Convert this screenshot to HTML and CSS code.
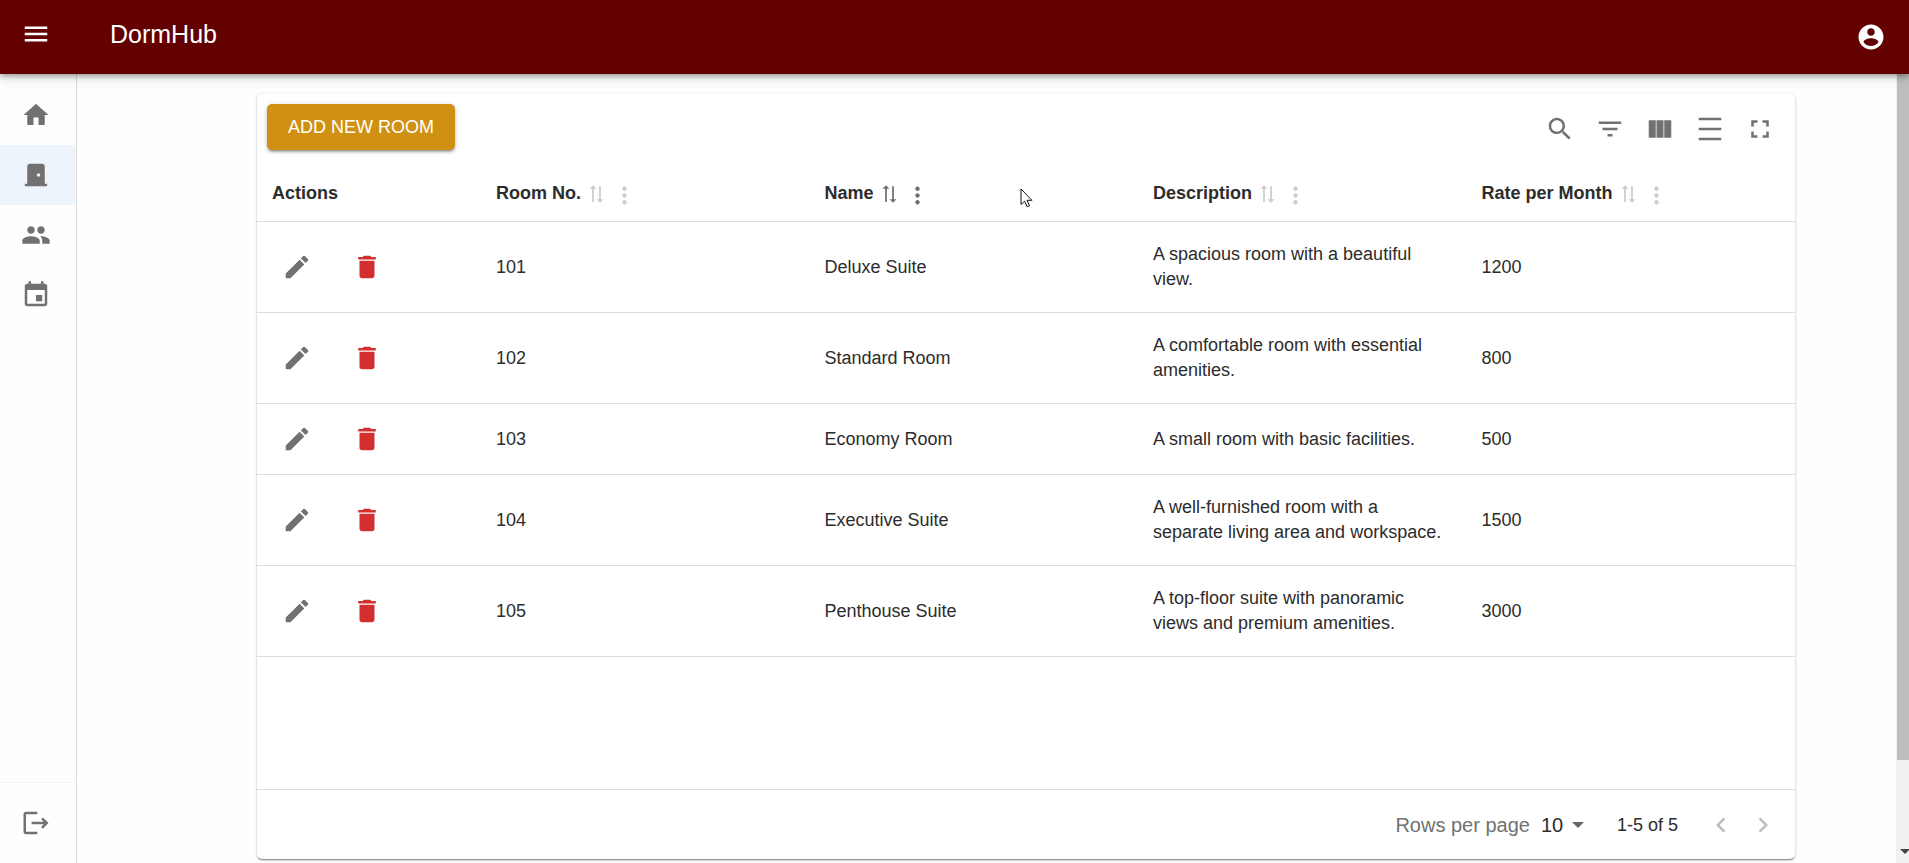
FILE: index.html
```html
<!DOCTYPE html>
<html lang="en">
<head>
<meta charset="utf-8">
<title>DormHub</title>
<link rel="stylesheet" href="styles.css">
</head>
<body>
<svg class="sprite" aria-hidden="true">
  <symbol id="edit" viewBox="0 0 24 24"><path d="M3 17.25V21h3.75L17.81 9.94l-3.75-3.75L3 17.25zM20.71 7.04c.39-.39.39-1.02 0-1.41l-2.34-2.34a.9959.9959 0 0 0-1.41 0l-1.83 1.83 3.75 3.75 1.83-1.83z"/></symbol>
  <symbol id="delete" viewBox="0 0 24 24"><path d="M6 19c0 1.1.9 2 2 2h8c1.1 0 2-.9 2-2V7H6v12zM19 4h-3.5l-1-1h-5l-1 1H5v2h14V4z"/></symbol>
  <symbol id="sort" viewBox="0 0 24 24"><path d="M8 2L4 6h3v15h2V6h3L8 2zM16 22l4-4h-3V3h-2v15h-3l4 4z"/></symbol>
  <symbol id="more" viewBox="0 0 24 24"><path d="M12 8c1.1 0 2-.9 2-2s-.9-2-2-2-2 .9-2 2 .9 2 2 2zm0 2c-1.1 0-2 .9-2 2s.9 2 2 2 2-.9 2-2-.9-2-2-2zm0 6c-1.1 0-2 .9-2 2s.9 2 2 2 2-.9 2-2-.9-2-2-2z"/></symbol>
</svg>

<header class="topbar">
  <button class="icon-button" aria-label="Open menu"><svg class="icon" viewBox="0 0 24 24"><path d="M3 18h18v-2H3v2zm0-5h18v-2H3v2zm0-7v2h18V6H3z"/></svg></button>
  <h1 class="brand">DormHub</h1>
  <button class="icon-button account" aria-label="Account"><svg class="icon" viewBox="0 0 24 24"><path d="M12 2C6.48 2 2 6.48 2 12s4.48 10 10 10 10-4.48 10-10S17.52 2 12 2zm0 3c1.66 0 3 1.34 3 3s-1.34 3-3 3-3-1.34-3-3 1.34-3 3-3zm0 14.2c-2.5 0-4.71-1.28-6-3.22.03-1.99 4-3.08 6-3.08 1.99 0 5.97 1.09 6 3.08-1.29 1.94-3.5 3.22-6 3.22z"/></svg></button>
</header>

<div class="layout">
  <nav class="sidebar" aria-label="Main">
    <a class="nav-item" href="#home" aria-label="Home"><svg class="icon" viewBox="0 0 24 24"><path d="M10 20v-6h4v6h5v-8h3L12 3 2 12h3v8z"/></svg></a>
    <a class="nav-item selected" href="#rooms" aria-label="Rooms" aria-current="page"><svg class="icon" viewBox="0 0 24 24"><path d="M20 19h-1V5c0-1.100-.9-2-2-2H7c-1.100 0-2 .9-2 2v14H4c-.55 0-1 .45-1 1s.45 1 1 1h16c.55 0 1-.45 1-1s-.45-1-1-1zm-6-5.600c-.77 0-1.400-.63-1.400-1.400s.63-1.400 1.400-1.400 1.400.63 1.400 1.400-.63 1.400-1.400 1.400z"/></svg></a>
    <a class="nav-item" href="#tenants" aria-label="Tenants"><svg class="icon" viewBox="0 0 24 24"><path d="M16 11c1.660 0 2.990-1.340 2.990-3S17.660 5 16 5c-1.660 0-3 1.340-3 3s1.340 3 3 3zm-8 0c1.660 0 2.990-1.340 2.990-3S9.660 5 8 5C6.340 5 5 6.340 5 8s1.340 3 3 3zm0 2c-2.330 0-7 1.170-7 3.500V19h14v-2.500c0-2.330-4.670-3.500-7-3.500zm8 0c-.29 0-.62.02-.97.05 1.160.84 1.970 1.970 1.970 3.450V19h6v-2.500c0-2.330-4.670-3.500-7-3.500z"/></svg></a>
    <a class="nav-item" href="#calendar" aria-label="Calendar"><svg class="icon" viewBox="0 0 24 24"><path d="M17 12h-5v5h5v-5zM16 1v2H8V1H6v2H5c-1.110 0-1.990.9-1.990 2L3 19c0 1.100.89 2 2 2h14c1.100 0 2-.9 2-2V5c0-1.100-.9-2-2-2h-1V1h-2zm3 18H5V8h14v11z"/></svg></a>
    <div class="nav-end">
      <a class="nav-item" href="#logout" aria-label="Log out"><svg class="icon" viewBox="0 0 24 24"><path d="M13 3H4c-1.100 0-2 .9-2 2v14c0 1.100.9 2 2 2h9v-2H4V5h9zM17.500 7.500l-1.400 1.400 2.100 2.100H8.500v2h9.700l-2.100 2.100 1.400 1.400L22 12z"/></svg></a>
    </div>
  </nav>

  <main class="content">
    <section class="card" aria-label="Rooms">
      <div class="toolbar">
        <button class="add-button">ADD NEW ROOM</button>
        <div class="tools">
          <button class="icon-button" aria-label="Search"><svg class="icon" viewBox="0 0 24 24"><path d="M15.500 14h-.79l-.28-.27C15.410 12.590 16 11.110 16 9.500 16 5.910 13.090 3 9.500 3S3 5.910 3 9.500 5.910 16 9.500 16c1.610 0 3.090-.59 4.230-1.570l.27.28v.79l5 4.990L20.490 19l-4.990-5zm-6 0C7.010 14 5 11.990 5 9.500S7.010 5 9.500 5 14 7.010 14 9.500 11.990 14 9.500 14z"/></svg></button>
          <button class="icon-button" aria-label="Filters"><svg class="icon" viewBox="0 0 24 24"><path d="M10 18h4v-2h-4v2zM3 6v2h18V6H3zm3 7h12v-2H6v2z"/></svg></button>
          <button class="icon-button" aria-label="Columns"><svg class="icon" viewBox="0 0 24 24"><path d="M3 5h5.600v14H3zM9.200 5h5.600v14H9.200zM15.400 5H21v14h-5.600z"/></svg></button>
          <button class="icon-button" aria-label="Density"><svg class="icon" viewBox="0 0 24 24"><path d="M3 3h18v2H3zM3 19h18v2H3zM3 11h18v2H3z"/></svg></button>
          <button class="icon-button" aria-label="Full screen"><svg class="icon" viewBox="0 0 24 24"><path d="M7 14H5v5h5v-2H7v-3zm-2-4h2V7h3V5H5v5zm12 7h-3v2h5v-5h-2v3zM14 5v2h3v3h2V5h-5z"/></svg></button>
        </div>
      </div>

      <table class="rooms">
        <colgroup><col class="col-actions"><col><col><col><col></colgroup>
        <thead>
          <tr>
            <th scope="col">Actions</th>
            <th scope="col"><div class="head">Room No.<button class="sort" aria-label="Sort by room number"><svg viewBox="0 0 24 24"><use href="#sort"/></svg></button><button class="more" aria-label="Room number options"><svg viewBox="0 0 24 24"><use href="#more"/></svg></button></div></th>
            <th scope="col"><div class="head active">Name<button class="sort" aria-label="Sort by name"><svg viewBox="0 0 24 24"><use href="#sort"/></svg></button><button class="more" aria-label="Name options"><svg viewBox="0 0 24 24"><use href="#more"/></svg></button></div></th>
            <th scope="col"><div class="head">Description<button class="sort" aria-label="Sort by description"><svg viewBox="0 0 24 24"><use href="#sort"/></svg></button><button class="more" aria-label="Description options"><svg viewBox="0 0 24 24"><use href="#more"/></svg></button></div></th>
            <th scope="col"><div class="head">Rate per Month<button class="sort" aria-label="Sort by rate"><svg viewBox="0 0 24 24"><use href="#sort"/></svg></button><button class="more" aria-label="Rate options"><svg viewBox="0 0 24 24"><use href="#more"/></svg></button></div></th>
          </tr>
        </thead>
        <tbody>
          <tr>
            <td><div class="actions"><button class="icon-button" aria-label="Edit room 101"><svg class="icon" viewBox="0 0 24 24"><use href="#edit"/></svg></button><button class="icon-button danger" aria-label="Delete room 101"><svg class="icon" viewBox="0 0 24 24"><use href="#delete"/></svg></button></div></td>
            <td>101</td><td>Deluxe Suite</td><td>A spacious room with a beautiful view.</td><td>1200</td>
          </tr>
          <tr>
            <td><div class="actions"><button class="icon-button" aria-label="Edit room 102"><svg class="icon" viewBox="0 0 24 24"><use href="#edit"/></svg></button><button class="icon-button danger" aria-label="Delete room 102"><svg class="icon" viewBox="0 0 24 24"><use href="#delete"/></svg></button></div></td>
            <td>102</td><td>Standard Room</td><td>A comfortable room with essential amenities.</td><td>800</td>
          </tr>
          <tr>
            <td><div class="actions"><button class="icon-button" aria-label="Edit room 103"><svg class="icon" viewBox="0 0 24 24"><use href="#edit"/></svg></button><button class="icon-button danger" aria-label="Delete room 103"><svg class="icon" viewBox="0 0 24 24"><use href="#delete"/></svg></button></div></td>
            <td>103</td><td>Economy Room</td><td>A small room with basic facilities.</td><td>500</td>
          </tr>
          <tr>
            <td><div class="actions"><button class="icon-button" aria-label="Edit room 104"><svg class="icon" viewBox="0 0 24 24"><use href="#edit"/></svg></button><button class="icon-button danger" aria-label="Delete room 104"><svg class="icon" viewBox="0 0 24 24"><use href="#delete"/></svg></button></div></td>
            <td>104</td><td>Executive Suite</td><td>A well-furnished room with a separate living area and workspace.</td><td>1500</td>
          </tr>
          <tr>
            <td><div class="actions"><button class="icon-button" aria-label="Edit room 105"><svg class="icon" viewBox="0 0 24 24"><use href="#edit"/></svg></button><button class="icon-button danger" aria-label="Delete room 105"><svg class="icon" viewBox="0 0 24 24"><use href="#delete"/></svg></button></div></td>
            <td>105</td><td>Penthouse Suite</td><td>A top-floor suite with panoramic views and premium amenities.</td><td>3000</td>
          </tr>
        </tbody>
      </table>

      <footer class="pagination">
        <label class="page-label" for="page-size">Rows per page</label>
        <div class="page-size">
          <select id="page-size"><option>5</option><option selected>10</option><option>25</option></select>
          <svg class="caret" viewBox="0 0 12 6" aria-hidden="true"><path d="M0 0h12L6 6z"/></svg>
        </div>
        <span class="range">1-5 of 5</span>
        <button class="page-button" aria-label="Previous page" disabled><svg class="icon" viewBox="0 0 24 24"><path d="M15.410 7.410L14 6l-6 6 6 6 1.410-1.410L10.830 12z"/></svg></button>
        <button class="page-button" aria-label="Next page" disabled><svg class="icon" viewBox="0 0 24 24"><path d="M10 6L8.590 7.410 13.170 12l-4.580 4.590L10 18l6-6z"/></svg></button>
      </footer>
    </section>
  </main>

  <div class="scrollbar" aria-hidden="true">
    <div class="thumb"></div>
    <svg class="scroll-arrow" viewBox="0 0 10 5"><path d="M0 0h10L5 5z"/></svg>
  </div>
</div>

<svg class="pointer" viewBox="0 0 13 20" aria-hidden="true"><path d="M1 1v15.500l3.600-3.300 2.500 5.600 2.400-1.100-2.500-5.400h4.900z" fill="#fff" stroke="#111" stroke-width="1"/></svg>
</body>
</html>
```

FILE: styles.css
```css
* { box-sizing: border-box; }

body {
  margin: 0;
  height: 100vh;
  overflow: hidden;
  display: flex;
  flex-direction: column;
  background: #fefefe;
  color: #2c2c2c;
  font-family: "Liberation Sans", Arial, sans-serif;
  font-size: 18px;
  line-height: 25px;
}

button {
  border: 0;
  padding: 0;
  background: none;
  color: inherit;
  font: inherit;
  cursor: pointer;
}

svg { display: block; fill: currentColor; }

.sprite { position: absolute; width: 0; height: 0; }

.icon { width: 30px; height: 30px; }

.icon-button {
  width: 50px;
  height: 50px;
  display: grid;
  place-items: center;
  color: #717171;
}

.danger { color: #d32f2f; }

/* Top bar */
.topbar {
  position: relative;
  z-index: 2;
  flex: none;
  height: 74px;
  padding: 0 13px 6px 11px;
  display: flex;
  align-items: center;
  gap: 49px;
  background: #630000;
  color: #fff;
  box-shadow: 0 2px 5px rgba(0, 0, 0, .3), 0 4px 12px rgba(0, 0, 0, .14);
}

.topbar .icon-button { color: #fff; }

.topbar .account { margin-left: auto; align-self: flex-end; height: 62px; }

.brand {
  margin: 0;
  font-size: 25px;
  font-weight: 400;
  line-height: 40px;
}

/* Page frame */
.layout { flex: 1; min-height: 0; display: flex; }

.sidebar {
  flex: none;
  width: 77px;
  padding-top: 11px;
  display: flex;
  flex-direction: column;
  border-right: 1px solid #dcdcdc;
}

.nav-item {
  height: 60px;
  padding-left: 21px;
  display: flex;
  align-items: center;
  color: #717171;
}

.selected { background: #edf4fc; }

.nav-end {
  margin-top: auto;
  padding: 10px 0;
  border-top: 1px solid #f4f4f4;
}

.content {
  flex: 1;
  min-width: 0;
  padding: 20px 101px 0 180px;
}

/* Rooms card */
.card {
  border-radius: 5px;
  background: #fff;
  box-shadow: 0 2px 1px -1px rgba(0, 0, 0, .3), 0 1px 2px rgba(0, 0, 0, .2), 0 1px 4px rgba(0, 0, 0, .12);
}

.toolbar {
  padding: 10px 10px 8px;
  display: flex;
  align-items: flex-start;
  justify-content: space-between;
}

.add-button {
  height: 46px;
  padding: 0 21px;
  border-radius: 5px;
  background: #d09112;
  color: #fff;
  box-shadow: 0 3px 2px -2px rgba(0, 0, 0, .25), 0 2px 3px rgba(0, 0, 0, .2), 0 1px 6px rgba(0, 0, 0, .14);
}

.tools { display: flex; }

.rooms {
  width: 100%;
  table-layout: fixed;
  border-collapse: separate;
  border-spacing: 0;
}

.col-actions { width: 224px; }

.rooms th,
.rooms td {
  padding: 20px 15px;
  border-bottom: 1px solid #dedede;
  text-align: left;
  vertical-align: middle;
}

.rooms th { padding: 19px 15px 15px; }

.rooms td:first-child { padding: 10px 15px; }

.head { display: flex; align-items: center; color: #2c2c2c; }

.sort,
.more { height: 24px; color: #cdcdcd; }

.sort { margin-left: 5px; }

.sort svg { width: 21px; height: 24px; }

.more { margin-left: 4px; }

.more svg { width: 27px; height: 27px; }

.active .sort,
.active .more { color: #717171; }

.actions { display: flex; gap: 20px; }

/* Pagination */
.pagination {
  margin-top: 132px;
  padding: 12px 11px 11px 15px;
  display: flex;
  align-items: center;
  justify-content: flex-end;
  border-top: 1px solid #dedede;
}

.page-label { margin-right: 11px; color: #717171; font-size: 20px; }

.page-size { display: flex; align-items: center; }

.page-size select {
  width: 31px;
  height: 30px;
  padding: 0;
  border: 0;
  appearance: none;
  background: none;
  color: inherit;
  font: inherit;
  font-size: 20px;
}

.caret { width: 12px; height: 6px; color: #666; }

.range { margin: 0 22px 0 33px; }

.page-button {
  width: 42px;
  height: 46px;
  display: grid;
  place-items: center;
  color: #bdbdbd;
}

/* Scrollbar */
.scrollbar {
  flex: none;
  width: 13px;
  padding-left: 1px;
  display: flex;
  flex-direction: column;
  justify-content: space-between;
  background: #f1f1f1;
}

.thumb { height: 87%; background: #bebebe; }

.scroll-arrow { width: 10px; height: 5px; margin: 0 0 9px 3px; color: #444; }

/* Mouse pointer over the page */
.pointer {
  position: absolute;
  left: 1020px;
  top: 188px;
  width: 13px;
  height: 20px;
}
```
